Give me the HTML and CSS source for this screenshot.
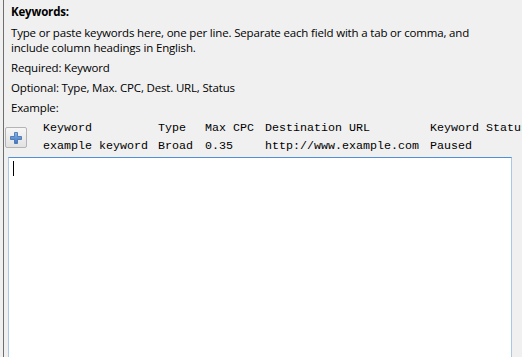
FILE: index.html
```html
<!DOCTYPE html>
<html>
<head>
<meta charset="utf-8">
<link rel="stylesheet" href="styles.css">
</head>
<body>
<div class="panel">
  <div class="intro">
    <div class="title">Keywords:</div>
    <p class="para">Type or paste keywords here, one per line. Separate each field with a tab or comma, and include column headings in English.</p>
    <p class="para">Required: Keyword</p>
    <p class="para">Optional: Type, Max. CPC, Dest. URL, Status</p>
    <p class="para">Example:</p>
  </div>
  <div class="example">
    <button class="add" type="button" aria-label="Add">
      <svg width="12" height="12" viewBox="0 0 12 12">
        <defs>
          <linearGradient id="pg" x1="0" y1="0" x2="0" y2="1">
            <stop offset="0" stop-color="#8fb6e6"/>
            <stop offset="1" stop-color="#3a75c4"/>
          </linearGradient>
        </defs>
        <path d="M4.5 0.5h3v4h4v3h-4v4h-3v-4h-4v-3h4z" fill="url(#pg)" stroke="#3f6fae" stroke-width="0.8"/>
      </svg>
    </button>
    <div class="sample">
      <span>Keyword</span><span>Type</span><span>Max CPC</span><span>Destination URL</span><span>Keyword Status</span>
      <span>example keyword</span><span>Broad</span><span>0.35</span><span>http://www.example.com</span><span>Paused</span>
    </div>
  </div>
  <div class="editor">
    <div class="box"><span class="caret"></span></div>
  </div>
</div>
</body>
</html>
```
FILE: styles.css
```css
html, body {
  margin: 0;
  padding: 0;
  background: #f0f0f0;
  height: 100%;
  overflow: hidden;
}
.panel {
  margin-left: 3px;
  border-left: 1px solid #6e6e6e;
  height: 357px;
  display: flex;
  flex-direction: column;
  font-family: "Open Sans", "Noto Sans", sans-serif;
  font-size: 11.5px;
  letter-spacing: -0.17px;
  color: #000;
}
.intro {
  padding: 4px 0 0 7px;
}
.title {
  font-weight: bold;
  line-height: 16px;
  height: 16px;
}
.para {
  margin: 5px 0 0 0;
  line-height: 15px;
  width: 490px;
}
.example {
  display: flex;
  align-items: flex-start;
  margin-top: 4px;
}
.add {
  margin: 8px 0 0 1px;
  width: 22px;
  height: 21px;
  padding: 0;
  border: 1px solid #b4b4b4;
  border-radius: 2px;
  background: linear-gradient(#f6f6f6, #e2e2e2);
  display: flex;
  align-items: center;
  justify-content: center;
}
.sample {
  margin-left: 16px;
  display: grid;
  grid-template-columns: 115px 47px 60px 165px 100px;
  font-family: "Liberation Mono", monospace;
  font-size: 11.67px;
  letter-spacing: 0;
  line-height: 18px;
  white-space: nowrap;
  overflow: hidden;
  flex: 1;
}
.editor {
  flex: 1;
  display: flex;
  padding: 2px 10px 0 4px;
}
.box {
  flex: 1;
  border: 1px solid #a9c8e6;
  border-top-color: #4f8fd6;
  border-bottom: none;
  background: #fff;
  padding: 3px 4px;
}
.caret {
  display: block;
  width: 1px;
  height: 15px;
  background: #000;
}
```
